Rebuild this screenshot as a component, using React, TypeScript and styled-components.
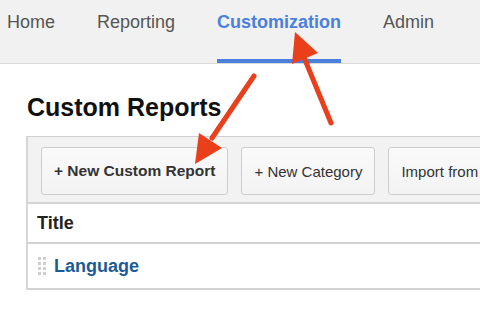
import React from "react";
import styled, { createGlobalStyle } from "styled-components";

const Global = createGlobalStyle`
  html, body { margin: 0; padding: 0; background: #fff; overflow: hidden; }
  body { font-family: "Liberation Sans", Arial, sans-serif; width: 480px; height: 310px; }
`;

const Page = styled.div`
  position: relative;
  width: 480px;
  height: 310px;
  overflow: hidden;
`;

const Nav = styled.nav`
  display: flex;
  gap: 42px;
  height: 63px;
  padding-left: 7px;
  background: #f1f1f1;
  border-bottom: 1px solid #dadada;
`;

const NavItem = styled.div<{ $active?: boolean }>`
  box-sizing: border-box;
  height: 63px;
  padding-top: 12px;
  font-size: 18px;
  line-height: 20px;
  font-weight: ${(p) => (p.$active ? 700 : 400)};
  color: ${(p) => (p.$active ? "#4a80dd" : "#555")};
  border-bottom: 4px solid ${(p) => (p.$active ? "#4a80dd" : "transparent")};
`;

const Content = styled.main`
  padding: 28px 0 0 26px;
`;

const Heading = styled.h1`
  margin: 0 0 14px 1px;
  font-size: 25px;
  line-height: 30px;
  font-weight: 700;
  color: #111;
`;

const Panel = styled.section`
  width: 600px;
  border-top: 1px solid #cfcfcf;
  border-left: 2px solid #d6d6d6;
`;

const Toolbar = styled.div`
  display: flex;
  gap: 13px;
  padding: 10px 0 7px 13px;
  background: #f2f2f2;
  border-bottom: 2px solid #d4d4d4;
`;

const Button = styled.button<{ $bold?: boolean }>`
  box-sizing: border-box;
  height: 48px;
  padding: 0 12px;
  font-family: "Liberation Sans", Arial, sans-serif;
  font-size: ${(p) => (p.$bold ? "15.5px" : "15px")};
  font-weight: ${(p) => (p.$bold ? 700 : 400)};
  color: #333;
  background: linear-gradient(#fafafa, #f3f3f3);
  border: 1px solid #cdcdcd;
  border-radius: 3px;
  white-space: nowrap;
`;

const Row = styled.div<{ $height: number }>`
  display: flex;
  align-items: center;
  height: ${(p) => p.$height}px;
  padding-left: 9px;
  background: #fff;
  border-bottom: 2px solid #d2d2d2;
`;

const HeaderCell = styled.div`
  font-size: 18px;
  font-weight: 700;
  color: #222;
`;

const LinkCell = styled.a`
  font-size: 18px;
  font-weight: 700;
  color: #1b5b97;
  text-decoration: none;
`;

const Handle = styled.div`
  display: grid;
  grid-template-columns: repeat(2, 3px);
  grid-auto-rows: 3px;
  gap: 2px 2px;
  margin: 0 8px 0 1px;
  & > span { background: #cfcfcf; }
`;

const Overlay = styled.svg`
  position: absolute;
  left: 0;
  top: 0;
  pointer-events: none;
`;

const RED = "#ea3f1b";

export default function App() {
  return (
    <Page>
      <Global />
      <Nav>
        <NavItem>Home</NavItem>
        <NavItem>Reporting</NavItem>
        <NavItem $active>Customization</NavItem>
        <NavItem>Admin</NavItem>
      </Nav>
      <Content>
        <Heading>Custom Reports</Heading>
        <Panel>
          <Toolbar>
            <Button $bold>+ New Custom Report</Button>
            <Button>+ New Category</Button>
            <Button>Import from Gallery</Button>
          </Toolbar>
          <Row $height={38}>
            <HeaderCell>Title</HeaderCell>
          </Row>
          <Row $height={44}>
            <Handle>
              {Array.from({ length: 8 }).map((_, i) => (
                <span key={i} />
              ))}
            </Handle>
            <LinkCell href="#">Language</LinkCell>
          </Row>
        </Panel>
      </Content>
      <Overlay width="480" height="310" viewBox="0 0 480 310">
        <line x1="331" y1="123" x2="303" y2="55" stroke={RED} strokeWidth="5" strokeLinecap="round" />
        <polygon points="295,32 318,53 292,64" fill={RED} />
        <line x1="254" y1="76" x2="212" y2="138" stroke={RED} strokeWidth="5" strokeLinecap="round" />
        <polygon points="195,164 199,133 222,148" fill={RED} />
      </Overlay>
    </Page>
  );
}
